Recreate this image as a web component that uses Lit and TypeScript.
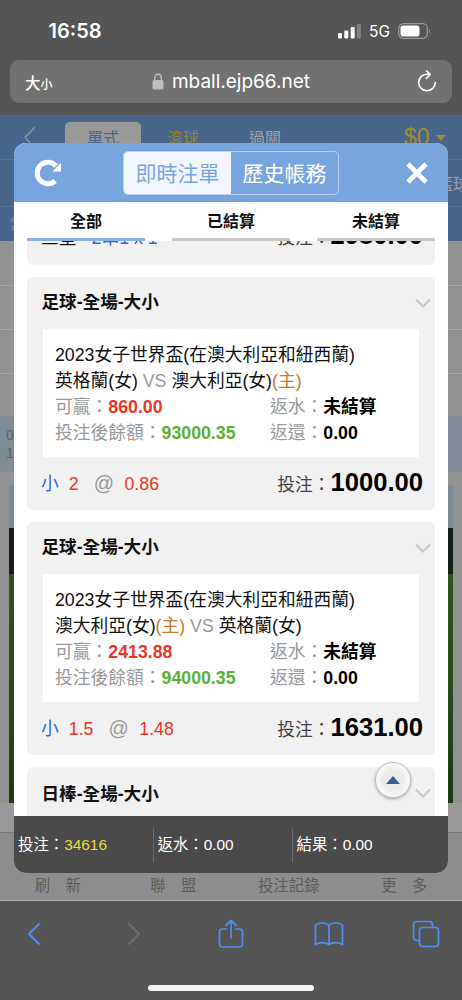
import { LitElement, html, css, svg, nothing } from "lit";
import { customElement, property } from "lit/decorators.js";

interface Team { name: string; home?: boolean }
interface Bet {
  title: string;
  league: string;
  teams: [Team, Team];
  win: string;
  balance: string;
  pick: string;
  line: string;
  odds: string;
  stake: string;
}

const BETS: Bet[] = [
  {
    title: "足球-全場-大小",
    league: "2023女子世界盃(在澳大利亞和紐西蘭)",
    teams: [{ name: "英格蘭(女)" }, { name: "澳大利亞(女)", home: true }],
    win: "860.00", balance: "93000.35", pick: "小", line: "2", odds: "0.86", stake: "1000.00",
  },
  {
    title: "足球-全場-大小",
    league: "2023女子世界盃(在澳大利亞和紐西蘭)",
    teams: [{ name: "澳大利亞(女)", home: true }, { name: "英格蘭(女)" }],
    win: "2413.88", balance: "94000.35", pick: "小", line: "1.5", odds: "1.48", stake: "1631.00",
  },
];

const chevron = svg`<path d="M1 1.5 8 8.5 15 1.5" fill="none" stroke="#c8c8c8" stroke-width="2.2"/>`;

@customElement("bet-card")
class BetCard extends LitElement {
  @property({ attribute: false }) bet!: Bet;

  static styles = css`
    :host { display: flex; flex-direction: column; flex: none; height: 233px; border-radius: 6px; background: #f1f1f1; font-size: 17.75px; color: #111; }
    .head { display: flex; align-items: center; justify-content: space-between; height: 52px; padding: 0 4px 0 14.5px; box-sizing: border-box; font-weight: 700; font-size: 17.6px; }
    .head span { line-height: 24px; margin-top: -2px; }
    .info { margin: 0 16px; height: 128px; box-sizing: border-box; padding: 13px 12px 11px; background: #fff; line-height: 26px; white-space: nowrap; }
    .pair { display: grid; grid-template-columns: 215px 1fr; height: 26px; }
    .muted { color: #999; }
    .home { color: #c8782c; }
    b { color: #000; }
    .red { color: #ee3427; }
    .green { color: #5bb236; }
    .foot { display: flex; align-items: center; justify-content: space-between; height: 53px; padding: 0 12px 3px 14px; box-sizing: border-box; }
    .pick { display: flex; align-items: baseline; }
    .blue { color: #2f62ee; margin-right: 10px; }
    .at { color: #999; margin: 0 10.5px 0 15px; font-size: 20px; }
    .stake { display: flex; align-items: baseline; color: #444; }
    .stake b { font-size: 25.6px; line-height: 30px; }
  `;

  render() {
    const b = this.bet;
    const team = (t: Team) => html`${t.name}${t.home ? html`<span class="home">(主)</span>` : nothing}`;
    return html`
      <div class="head"><span>${b.title}</span><svg width="16" height="11" viewBox="0 0 16 11">${chevron}</svg></div>
      <div class="info">
        <div>${b.league}</div>
        <div>${team(b.teams[0])} <span class="muted">VS</span> ${team(b.teams[1])}</div>
        <div class="pair"><span class="muted">可贏：<b class="red">${b.win}</b></span><span class="muted">返水：<b>未結算</b></span></div>
        <div class="pair"><span class="muted">投注後餘額：<b class="green">${b.balance}</b></span><span class="muted">返還：<b>0.00</b></span></div>
      </div>
      <div class="foot">
        <div class="pick"><span class="blue">${b.pick}</span><span class="red">${b.line}</span><span class="at">@</span><span class="red">${b.odds}</span></div>
        <div class="stake">投注：<b>${b.stake}</b></div>
      </div>`;
  }
}

@customElement("app-root")
class AppRoot extends LitElement {
  static styles = css`
    :host { display: block; font-family: "Liberation Sans", "Noto Sans CJK TC", sans-serif; }
    .screen { position: relative; width: 462px; height: 1000px; overflow: hidden; display: flex; flex-direction: column; background: #555; }
    .status { display: flex; align-items: center; height: 60px; padding: 2px 31px 0 48.5px; box-sizing: border-box; color: #fff; font-family: Inter, sans-serif; }
    .time { flex: 1; font-size: 20px; font-weight: 600; }
    .net { font-size: 15.5px; font-weight: 400; margin: 0 8px 0 7px; }
    .url { display: flex; align-items: center; justify-content: space-between; height: 43px; margin: 0 10px 12px; padding: 0 15px; box-sizing: border-box; border-radius: 9px; background: #717171; color: #fff; }
    .aa { display: flex; align-items: baseline; font-size: 15.5px; font-weight: 500; width: 30px; }
    .aa small { font-size: 12px; }
    .addr { display: flex; align-items: center; gap: 8px; font-family: Inter, sans-serif; font-size: 19px; }
    .reload { width: 30px; display: flex; justify-content: flex-end; }

    .page { height: 786px; flex: none; display: flex; flex-direction: column; background: #929292; color: #9ba1a8; }
    .nav { display: flex; height: 45px; box-sizing: border-box; border-bottom: 1px solid #5a7497; background: #48658c; font-size: 16px; }
    .nav .back { margin: 2px 29px 0 24px; height: 23px; margin-top: 11px; }
    .seg { width: 76px; height: 38px; margin-top: 7px; padding-top: 5px; box-sizing: border-box; border-radius: 5px; background: #999; color: #48658c; text-align: center; line-height: 24px; }
    .live { width: 84px; line-height: 24px; padding-top: 12px; text-align: center; color: #8f8430; }
    .parlay { width: 80px; line-height: 24px; padding-top: 12px; text-align: center; }
    .cash { margin-left: 99px; padding-top: 9px; color: #a48d27; font-size: 23px; line-height: 26px; display: flex; gap: 6px; }
    .caret { margin-top: 11px; width: 0; height: 0; border: 5px solid transparent; border-top: 6px solid #a48d27; border-bottom: 0; }
    .sports { display: flex; align-items: center; justify-content: flex-end; height: 47px; box-sizing: border-box; border-bottom: 1px solid #5a7497; background: #48658c; font-size: 16px; white-space: nowrap; }
    .sports span { margin-right: -7px; }
    .filter { height: 34px; background: #48658c; color: #7f8fa5; font-size: 15px; line-height: 33px; padding-left: 10px; }
    .row { height: 44px; box-sizing: border-box; border-bottom: 1px solid #a5a5a5; }
    .row.first { height: 45px; }
    .row.last { height: 42px; border: 0; }
    .match { height: 56px; background: #7f8b97; color: #5c6065; font-size: 14px; line-height: 18px; padding: 10px 6px; box-sizing: border-box; }
    .pitch { margin: 13px 9px 0; height: 318px; flex: none; background: linear-gradient(#7b8b96 0 43px, #171d18 43px 89px, #31501f 89px, #2b4a1a 200px, #1e3911); }
    .gap { height: 30px; box-sizing: border-box; border-bottom: 1px solid #7b7b7b; background: #999; }
    .menu { flex: 1; display: grid; grid-template-columns: repeat(4, 1fr); align-items: end; text-align: center; padding-bottom: 2px; background: #8d8d8d; border-bottom: 1px solid #b0b0b0; color: #5c5c5c; font-size: 15.4px; line-height: 24px; box-sizing: border-box; white-space: pre; }

    .tools { display: grid; grid-template-columns: repeat(5, 98px); margin-left: -14px; height: 66px; flex: none; justify-items: center; align-items: center; }
    .homebar { width: 166px; height: 6px; border-radius: 3px; background: #f3f3f3; margin: 18px auto 0; }

    .dialog { position: absolute; left: 14px; top: 143px; width: 434px; height: 730px; border-radius: 12px; overflow: hidden; display: flex; flex-direction: column; background: #fff; }
    .top { display: flex; align-items: center; height: 59px; flex: none; padding: 0 20px; box-sizing: border-box; background: #79a5de; }
    .switch { display: flex; width: 216px; height: 44px; box-sizing: border-box; border: 1px solid #b9d0ef; border-radius: 5px; overflow: hidden; font-size: 21px; line-height: 43px; color: #fff; text-align: center; margin: 0 67px 0 61px; }
    .switch span { flex: 1; }
    .switch .on { background: #f1f5fd; color: #79a5de; }
    .tabs { display: flex; justify-content: space-between; height: 39px; flex: none; padding: 0 13px; text-align: center; font-size: 16px; font-weight: 700; line-height: 40px; color: #111; background: #fff; }
    .tabs span { width: 118px; box-sizing: border-box; border-bottom: 3px solid #c8c8c8; height: 39px; }
    .tabs .on { border-color: #86b0e6; }
    .list { flex: 1; min-height: 0; overflow: hidden; display: flex; flex-direction: column; gap: 12px; padding: 0 13px; }
    .cut { height: 24px; flex: none; overflow: hidden; display: flex; align-items: flex-end; background: #f1f1f1; border-radius: 0 0 6px 6px; }
    .cutrow { flex: 1; display: flex; align-items: baseline; height: 56px; padding: 0 12px 0 14px; font-size: 17.75px; line-height: 53px; color: #444; }
    .cutrow .type { color: #111; margin-right: 15px; }
    .cutrow .combo { color: #3f5fd9; flex: 1; }
    .cutrow b { font-size: 25.6px; color: #000; }
    .next { height: 60px; flex: none; border-radius: 6px 6px 0 0; background: #f1f1f1; display: flex; align-items: flex-start; justify-content: space-between; padding: 1px 4px 0 14.5px; font-weight: 700; font-size: 17.6px; line-height: 52px; color: #111; }
    .next svg { margin-top: 20px; }
    .sum { display: grid; grid-template-columns: 139.5px 139px 1fr; align-items: center; height: 57px; flex: none; background: #4a4a4a; color: #fff; font-size: 15.4px; }
    .sum span { padding-left: 4px; line-height: 34px; height: 34px; box-sizing: border-box; border-right: 1px solid #6b6b6b; }
    .sum span:last-child { border: 0; }
    .sum em { font-style: normal; color: #eedb2e; }
    .up { position: absolute; left: 375px; top: 762px; width: 36px; height: 36px; box-sizing: border-box; border-radius: 50%; border: 1px solid #bbb; background: radial-gradient(#ebebeb 40%, #fafafa 70%); box-shadow: 0 1px 3px rgba(0,0,0,.35); display: flex; align-items: center; justify-content: center; }
    .up i { border: 7.5px solid transparent; border-bottom: 8px solid #3a5d98; border-top: 0; margin-top: -1px; }
  `;

  render() {
    return html`
      <div class="screen">
        <div class="status">
          <span class="time">16:58</span>
          <svg width="24" height="16" viewBox="0 0 24 16" fill="#fff"><rect x="0" y="10" width="4" height="5.5" rx="1.2"/><rect x="6.3" y="7.5" width="4" height="8" rx="1.2"/><rect x="12.7" y="4" width="4" height="11.5" rx="1.2"/><rect x="19" y="1" width="4" height="14.5" rx="1.2" opacity=".25"/></svg>
          <span class="net">5G</span>
          <svg width="33" height="16" viewBox="0 0 33 16"><rect x=".7" y=".7" width="28.6" height="14.6" rx="4.6" fill="none" stroke="#999" stroke-width="1.2"/><rect x="2.5" y="2.5" width="19" height="11" rx="2.8" fill="#fff"/><path d="M31 5.5q2 2.500 0 5z" fill="#999"/></svg>
        </div>
        <div class="url">
          <span class="aa">大<small>小</small></span>
          <span class="addr"><svg width="12" height="17" viewBox="0 0 12 17"><rect x=".5" y="7" width="11" height="9.500" rx="1.6" fill="#bcbcc1"/><path d="M2.800 8V4.500a3.200 3.200 0 0 1 6.400 0V8" fill="none" stroke="#bcbcc1" stroke-width="1.4"/></svg>mball.ejp66.net</span>
          <span class="reload"><svg width="20" height="24" viewBox="0 0 20 24" fill="none" stroke="#fff" stroke-width="1.6" stroke-linecap="round" stroke-linejoin="round"><path d="M18.300 12.500A8.300 8.300 0 1 1 10.500 4.200H13M9.500 .9 13.200 4.400 9.500 8.300"/></svg></span>
        </div>

        <div class="page">
          <div class="nav">
            <svg class="back" width="12" height="23" viewBox="0 0 12 23" fill="none" stroke="#8a96a6" stroke-width="1.300"><path d="M11 1 1 11.500 11 22"/></svg>
            <span class="seg">單式</span><span class="live">滾球</span><span class="parlay">過關</span>
            <span class="cash">$0<i class="caret"></i></span>
          </div>
          <div class="sports"><span>籃球</span></div>
          <div class="filter">當</div>
          <div class="row first"></div><div class="row"></div><div class="row"></div><div class="row last"></div>
          <div class="match">08<br>16</div>
          <div class="pitch"></div>
          <div class="gap"></div>
          <div class="menu"><span>刷　新</span><span>聯　盟</span><span>投注記錄</span><span>更　多</span></div>
        </div>

        <div class="tools">
          <svg width="16" height="24" viewBox="0 0 16 24" fill="none" stroke="#4f8df5" stroke-width="2"><path d="M12.500 1.500 2 12 12.500 22.500"/></svg>
          <svg width="14" height="24" viewBox="0 0 14 24" fill="none" stroke="#6c6c6c" stroke-width="2"><path d="M2.500 1.500 13 12 2.500 22.500"/></svg>
          <svg width="26" height="30" viewBox="0 0 26 30" fill="none" stroke="#4f8df5" stroke-width="1.700" stroke-linecap="round" stroke-linejoin="round"><path d="M8.500 10H4.500A3 3 0 0 0 1.500 13V25A3 3 0 0 0 4.500 28H21.500A3 3 0 0 0 24.500 25V13A3 3 0 0 0 21.500 10H17.500M13 18.500V1.500M8 6.300 13 1.300 18 6.300"/></svg>
          <svg width="30" height="26" viewBox="0 0 30 26" fill="none" stroke="#4f8df5" stroke-width="1.700" stroke-linejoin="round"><path d="M15 4.200C12 1.200 5 1 1.500 4.200V23.500C5 21 11.500 21 15 23.500 18.500 21 25 21 28.500 23.500V4.200C25 1 18 1.200 15 4.200ZM15 4.200V23.500"/></svg>
          <svg width="30" height="28" viewBox="0 0 30 28" fill="none" stroke="#4f8df5" stroke-width="1.700"><path d="M7.500 20.500H4.500A3 3 0 0 1 1.500 17.500V4.500A3 3 0 0 1 4.500 1.500H17.500A3 3 0 0 1 20.500 4.500V7.500"/><rect x="7.500" y="7.500" width="19" height="19" rx="3"/></svg>
        </div>
        <div class="homebar"></div>

        <div class="dialog">
          <div class="top">
            <svg width="28" height="28" viewBox="0 0 28 28"><path d="M21.200 21.800A10.700 10.700 0 1 1 22 7" fill="none" stroke="#fff" stroke-width="5"/><path d="M27 3.800V12.500H18.500Z" fill="#fff"/></svg>
            <div class="switch"><span class="on">即時注單</span><span>歷史帳務</span></div>
            <svg width="22" height="22" viewBox="0 0 22 22"><path d="M2 2 20 20M20 2 2 20" stroke="#fff" stroke-width="4.600"/></svg>
          </div>
          <div class="tabs"><span class="on">全部</span><span>已結算</span><span>未結算</span></div>
          <div class="list">
            <div class="cut"><div class="cutrow"><span class="type">三星</span><span class="combo">2串1 x 1</span>投注：<b>2980.00</b></div></div>
            ${BETS.map((b) => html`<bet-card .bet=${b}></bet-card>`)}
            <div class="next"><span>日棒-全場-大小</span><svg width="16" height="11" viewBox="0 0 16 11">${chevron}</svg></div>
          </div>
          <div class="sum"><span>投注：<em>34616</em></span><span>返水：0.00</span><span>結果：0.00</span></div>
        </div>
        <div class="up"><i></i></div>
      </div>`;
  }
}
